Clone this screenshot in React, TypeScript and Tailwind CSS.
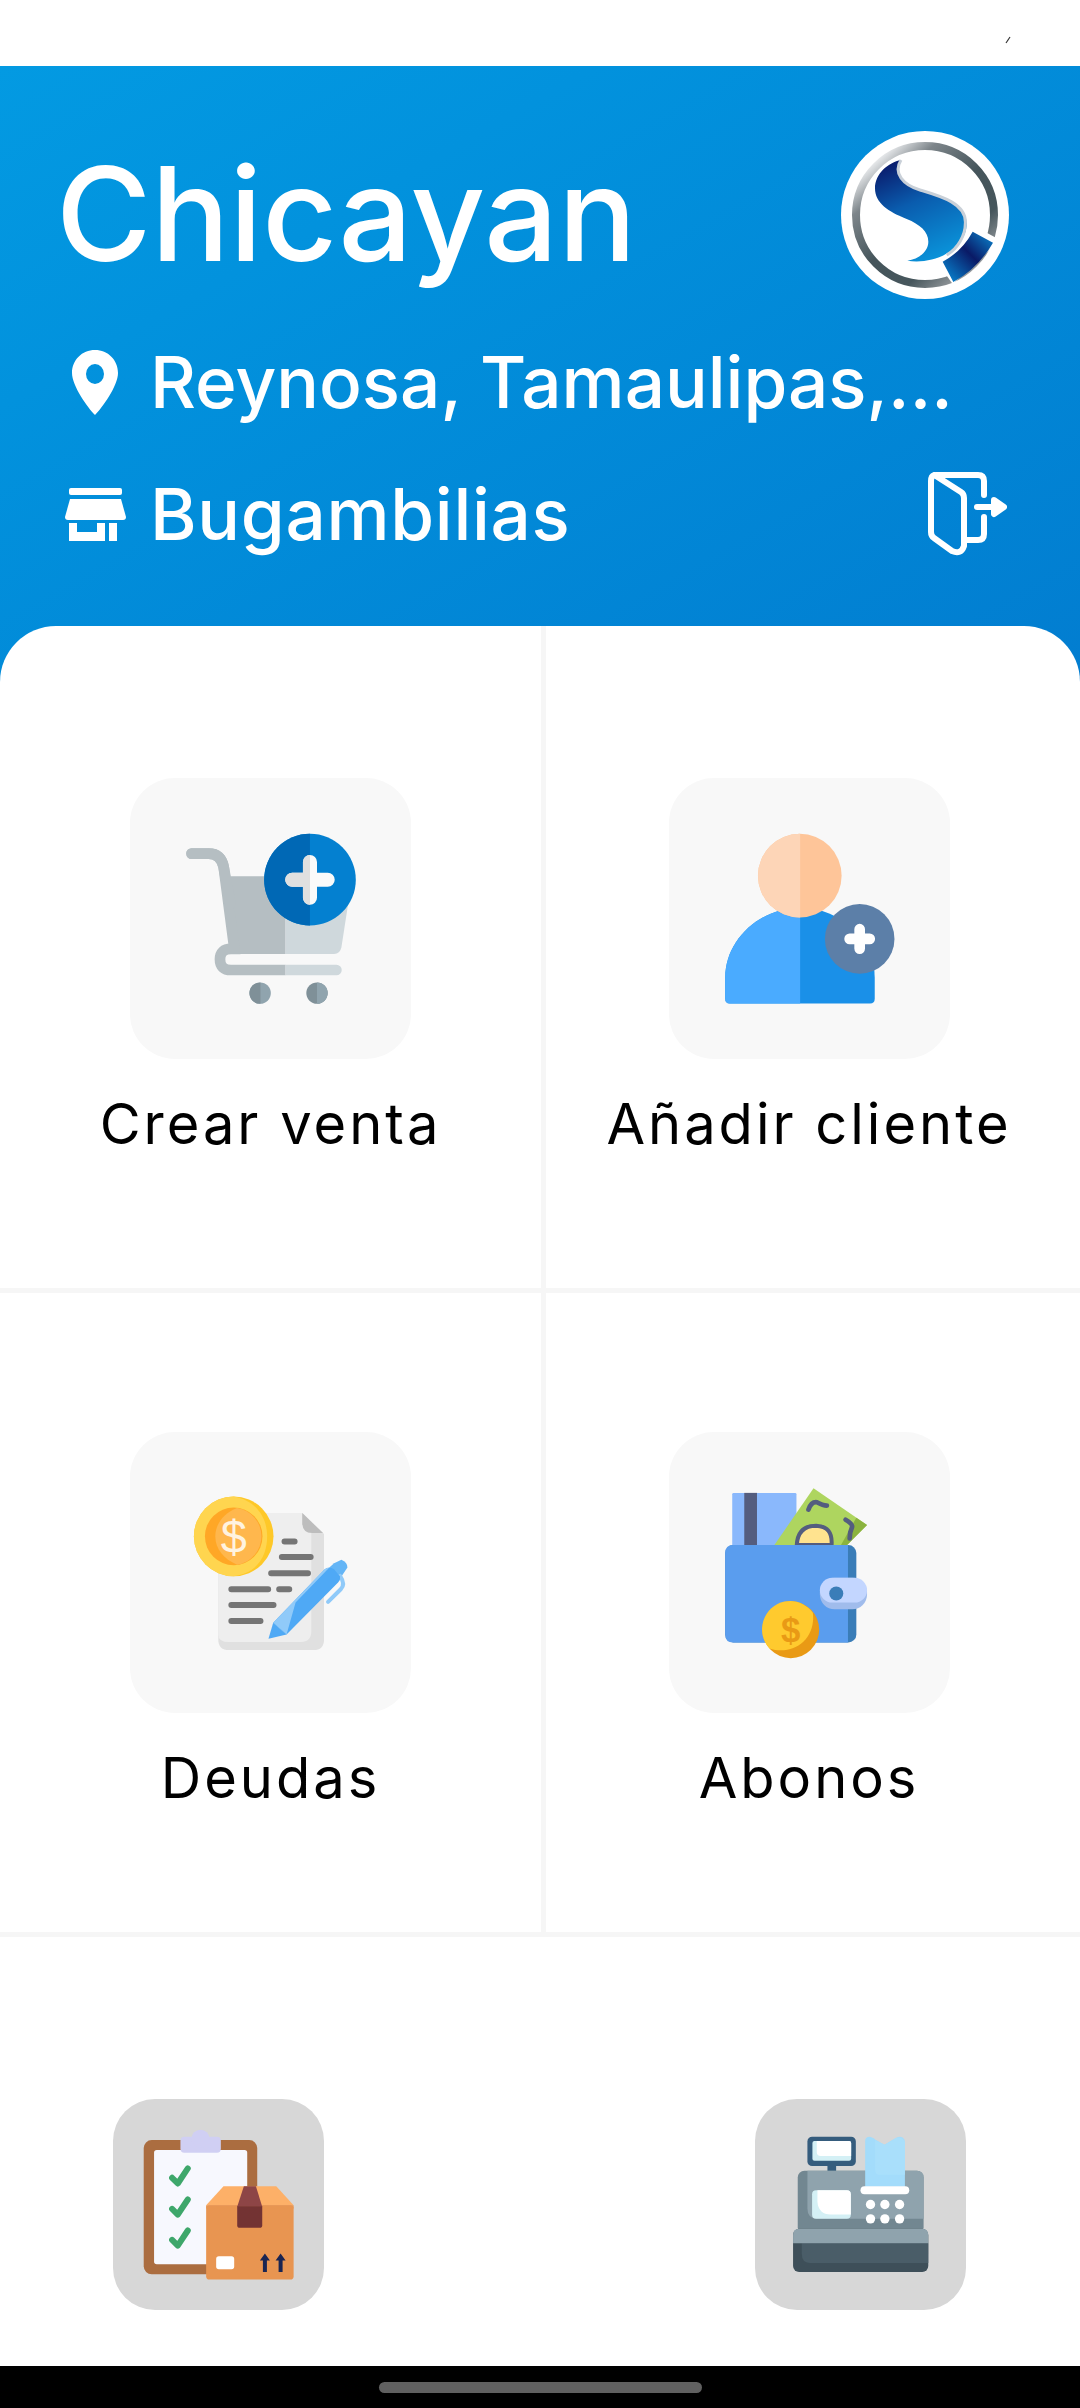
import React from "react";

const font = { fontFamily: "Inter, 'Noto Sans', sans-serif" };

function Logo() {
  return (
    <svg viewBox="63 33 504 504" className="w-[168px] h-[168px] shrink-0">
      <defs>
        <linearGradient id="ring" x1="0.15" y1="0.1" x2="0.85" y2="0.9">
          <stop offset="0" stopColor="#e8eaec" />
          <stop offset="0.18" stopColor="#7d858a" />
          <stop offset="0.5" stopColor="#45555b" />
          <stop offset="0.78" stopColor="#46565c" />
          <stop offset="1" stopColor="#9a9ea1" />
        </linearGradient>
        <linearGradient id="sblue" x1="0.3" y1="0" x2="0.7" y2="1">
          <stop offset="0" stopColor="#0a1f70" />
          <stop offset="0.4" stopColor="#0a5cae" />
          <stop offset="1" stopColor="#0a96dc" />
        </linearGradient>
        <linearGradient id="wedge" x1="0" y1="1" x2="1" y2="0">
          <stop offset="0" stopColor="#0790dc" />
          <stop offset="0.55" stopColor="#0a1a66" />
          <stop offset="1" stopColor="#0a8ad4" />
        </linearGradient>
      </defs>
      <circle cx="315" cy="285" r="252" fill="#fff" />
      <circle cx="315" cy="285" r="207" fill="none" stroke="url(#ring)" strokeWidth="24" />
      <path d="M355 432L398 492L540 360L470 322Z" fill="#fff" />
      <path d="M458 335L519 368Q475 445 400 486L368 425Q425 395 458 335Z" fill="url(#wedge)" />
      <path d="M243 120C205 128 165 160 165 205C165 250 205 275 260 297C300 313 325 335 325 365C325 395 295 418 262 422C340 435 440 390 440 310C440 250 360 228 300 210C250 195 218 160 243 120Z" fill="url(#sblue)" />
      <path d="M243 120C218 160 250 195 300 210C360 228 440 250 436 310C436 345 415 385 380 405" fill="none" stroke="#c9d0d8" strokeWidth="9" />
    </svg>
  );
}

function Pin() {
  return (
    <svg viewBox="0 0 46 65" className="w-[46px] h-[65px]">
      <path fillRule="evenodd" d="M23 0C10 0 0 10 0 23C0 36 16 58 23 65C30 58 46 36 46 23C46 10 36 0 23 0ZM23 14A9 10 0 1 1 23 34A9 10 0 1 1 23 14Z" fill="#fff" />
    </svg>
  );
}

function Store() {
  return (
    <svg viewBox="0 0 61 53" className="w-[61px] h-[53px]">
      <rect x="4" y="0" width="53" height="7" rx="2" fill="#fff" />
      <path d="M5 11H56L61 29Q61 32 58 32H3Q0 32 0 29Z" fill="#fff" />
      <path fillRule="evenodd" d="M4 35H12V44H32V35H40V53H4ZM44 35H52V53H44Z" fill="#fff" />
    </svg>
  );
}

function Exit() {
  return (
    <svg viewBox="0 0 79 84" className="w-[79px] h-[84px]" fill="none" stroke="#fff" strokeWidth="6" strokeLinecap="round" strokeLinejoin="round">
      <path d="M8 3H50Q56 3 56 9V23" />
      <path d="M56 45V62Q56 68 50 68H36" />
      <path d="M6 3Q3 4 3 9V60Q3 64 6 66L24 79Q33 83 36 74V26Q36 22 33 20L8 4" />
      <path d="M49 35H72" />
      <path d="M66 28L76 35L66 42Z" fill="#fff" />
    </svg>
  );
}

function Cart() {
  return (
    <svg viewBox="30 24 840 840" className="w-full h-full">
      <defs>
        <clipPath id="cl"><rect x="0" y="0" width="495" height="900" /></clipPath>
        <clipPath id="cr"><rect x="495" y="0" width="405" height="900" /></clipPath>
        <clipPath id="pl"><rect x="0" y="0" width="568" height="900" /></clipPath>
        <clipPath id="wl"><rect x="0" y="0" width="420" height="900" /></clipPath>
        <clipPath id="wr"><rect x="589" y="0" width="200" height="900" /></clipPath>
      </defs>
      {[["cl", "#b5bec2"], ["cr", "#cfd8dc"]].map(([c, f]) => (
        <g key={c} clipPath={`url(#${c})`}>
          <path d="M330 318H695L662 530Q658 550 640 550H342Z" fill={f} />
          <path d="M214 250H265Q302 250 310 290L342 535H332Q299 535 299 566Q299 598 332 598H647" fill="none" stroke={f} strokeWidth="32" strokeLinecap="round" />
        </g>
      ))}
      <path d="M214 250H265Q302 250 310 290L330 400" fill="none" stroke="#b5bec2" strokeWidth="32" strokeLinecap="round" />
      <circle cx="419" cy="667" r="32" fill="#90a4ae" />
      <circle cx="419" cy="667" r="32" fill="#7f9098" clipPath="url(#wl)" />
      <circle cx="589" cy="667" r="32" fill="#7f9098" />
      <circle cx="589" cy="667" r="32" fill="#90a4ae" clipPath="url(#wr)" />
      <circle cx="568" cy="328" r="137" fill="#0480d0" />
      <circle cx="568" cy="328" r="137" fill="#0068b5" clipPath="url(#pl)" />
      <path d="M515 328H621M568 275V382" stroke="#fafafa" strokeWidth="42" strokeLinecap="round" />
      <path d="M515 328H621M568 275V382" stroke="#e0e0e0" strokeWidth="42" strokeLinecap="round" clipPath="url(#pl)" />
    </svg>
  );
}

function Person() {
  return (
    <svg viewBox="30 24 840 840" className="w-full h-full">
      <defs>
        <clipPath id="hl"><rect x="0" y="0" width="422" height="900" /></clipPath>
      </defs>
      <path d="M198 620C198 510 300 412 422 412C545 412 645 510 645 620V684Q645 698 631 698H212Q198 698 198 684Z" fill="#1a90e8" />
      <path d="M198 620C198 510 300 412 422 412C545 412 645 510 645 620V684Q645 698 631 698H212Q198 698 198 684Z" fill="#4aabff" clipPath="url(#hl)" />
      <circle cx="421" cy="316" r="125" fill="#fec599" />
      <circle cx="421" cy="316" r="125" fill="#fdd5b7" clipPath="url(#hl)" />
      <circle cx="600" cy="505" r="104" fill="#5c7fa8" />
      <path d="M570 505H630M600 476V534" stroke="#fff" strokeWidth="32" strokeLinecap="round" />
    </svg>
  );
}

function Debt() {
  return (
    <svg viewBox="30 20 840 840" className="w-full h-full">
      <path d="M420 262H545L610 325V640Q610 672 578 672H326Q294 672 294 640V400Z" fill="#e0e0e0" />
      <path d="M420 262H545V290Q548 322 572 322V615Q572 648 540 648H326Q294 648 294 625V400Z" fill="#eeeeee" />
      <path d="M545 262L607 322H575Q547 322 545 295Z" fill="#bdbdbd" />
      <g stroke="#757575" strokeWidth="18" strokeLinecap="round">
        <path d="M492 347H522M484 394H570M452 442H562M333 490H443M476 490H506M333 537H459M333 585H420" />
      </g>
      <circle cx="340" cy="332" r="119" fill="#fec828" />
      <path d="M340 213A119 119 0 0 0 340 451C420 440 440 380 440 332C440 280 410 225 340 213Z" fill="#ffd54f" />
      <circle cx="340" cy="332" r="86" fill="#ffa726" />
      <path d="M350 247A86 86 0 0 1 350 417C310 400 285 370 285 332C285 295 310 262 350 247Z" fill="#ffb74d" />
      <text x="340" y="381" textAnchor="middle" fontSize="140" fontWeight="400" fill="#fff3e0" fontFamily="'Liberation Sans', sans-serif">$</text>
      <path d="M625 426L640 412L662 402Q680 410 680 425L660 455Z" fill="#64b5f6" />
      <path d="M658 450Q675 475 660 490L622 528" fill="none" stroke="#90caf9" strokeWidth="12" strokeLinecap="round" />
      <path d="M458 590L612 430Q625 422 640 430L658 452Q660 462 652 470L498 625Z" fill="#4fa9f5" />
      <path d="M458 590L612 430Q618 426 626 425L525 530L498 625Z" fill="#90caf9" />
      <path d="M444 638L458 590L498 625Z" fill="#4fa9f5" />
    </svg>
  );
}

function Wallet() {
  return (
    <svg viewBox="30 20 840 840" className="w-full h-full">
      <rect x="219" y="202" width="192" height="170" rx="4" fill="#8ab8fc" />
      <rect x="255" y="202" width="38" height="170" fill="#545d7f" />
      <path d="M345 358L462 188L622 298L555 365Z" fill="#aed55f" />
      <path d="M590 276L622 298L555 365H540Z" fill="#8bb33f" />
      <path d="M412 358Q415 300 470 300Q520 302 516 358Z" fill="#ffe38f" stroke="#545d7f" strokeWidth="12" />
      <path d="M447 252Q455 228 472 230Q490 240 502 240M558 282Q580 295 577 305Q570 320 570 338" fill="none" stroke="#545d7f" strokeWidth="14" strokeLinecap="round" />
      <rect x="198" y="358" width="392" height="291" rx="24" fill="#3a7db8" />
      <path d="M222 358H565V649H222Q198 649 198 625V382Q198 358 222 358Z" fill="#5a9dee" />
      <rect x="481" y="456" width="141" height="94" rx="44" fill="#a0bcec" />
      <rect x="481" y="456" width="141" height="74" rx="37" fill="#c3d6ff" />
      <circle cx="530" cy="503" r="21" fill="#3a7db8" />
      <circle cx="394" cy="611" r="85" fill="#e99a15" />
      <path d="M375 527A85 85 0 0 0 330 667C400 690 470 640 460 560C440 535 410 520 375 527Z" fill="#ffca2e" />
      <text x="394" y="648" textAnchor="middle" fontSize="104" fontWeight="700" fill="#e99a15" fontFamily="'Liberation Sans', sans-serif">$</text>
    </svg>
  );
}

function Inventory() {
  return (
    <svg viewBox="39 57 632 632" className="w-full h-full">
      <rect x="131" y="180" width="340" height="402" rx="24" fill="#ab6d40" />
      <rect x="162" y="210" width="279" height="342" rx="8" fill="#f7f8fe" />
      <rect x="241" y="170" width="121" height="48" rx="12" fill="#d0cff3" />
      <circle cx="301" cy="176" r="27" fill="#d0cff3" />
      <g fill="none" stroke="#3ea76b" strokeWidth="18" strokeLinecap="round" strokeLinejoin="round">
        <path d="M216 293L233 310L263 265M216 386L233 403L263 358M216 479L233 496L263 451" />
      </g>
      <path d="M318 375L370 318H528L580 375Z" fill="#fdb068" />
      <rect x="318" y="375" width="262" height="223" rx="10" fill="#e89551" />
      <path d="M318 375H580V385H318Z" fill="#e89551" />
      <path d="M431 318H467L486 380H411Z" fill="#8d4546" />
      <path d="M411 378H486V435Q486 443 478 443H419Q411 443 411 435Z" fill="#733333" />
      <rect x="348" y="528" width="54" height="39" rx="8" fill="#fff" />
      <path d="M494 520L509 541H500V575H488V541H479Z" fill="#1a2552" />
      <path d="M541 520L556 541H547V575H535V541H526Z" fill="#1a2552" />
    </svg>
  );
}

function Register() {
  return (
    <svg viewBox="48 57 632 632" className="w-full h-full">
      <rect x="265" y="255" width="26" height="20" fill="#355c7d" />
      <rect x="205" y="170" width="145" height="88" rx="14" fill="#355c7d" />
      <rect x="220" y="183" width="116" height="59" rx="6" fill="#d4f0f5" />
      <path d="M233 183H330Q336 183 336 189V228H245Q233 228 233 216Z" fill="#fff" />
      <rect x="176" y="272" width="377" height="190" rx="20" fill="#728791" />
      <path d="M205 272H533Q553 272 553 292V416H235Q205 416 205 385Z" fill="#8fa3ad" />
      <rect x="219" y="330" width="116" height="86" rx="12" fill="#d4f0f5" />
      <path d="M235 330H323Q335 330 335 342V403H275Q238 403 235 365Z" fill="#fff" />
      <path d="M378 182Q378 170 392 170Q404 172 410 180L436 194L470 174Q480 168 490 172Q497 176 497 186V320H378Z" fill="#a3dcfb" />
      <path d="M408 180L436 194L470 174Q490 168 497 186V284H420Q408 284 408 270Z" fill="#a9dffb" />
      <rect x="364" y="318" width="146" height="24" rx="12" fill="#fff" />
      {[394, 437, 481].map((x) =>
        [373, 416].map((y) => <circle key={`${x}${y}`} cx={x} cy={y} r="14" fill="#fff" />)
      )}
      <rect x="162" y="446" width="405" height="129" rx="18" fill="#3e4f59" />
      <path d="M188 489H567V548H212Q188 548 188 520Z" fill="#4a5d68" />
      <path d="M180 446H549Q567 446 567 464V489H162V464Q162 446 180 446Z" fill="#8fa3ad" />
    </svg>
  );
}

function Tile({ label, icon }: { label: string; icon: React.ReactNode }) {
  return (
    <div className="flex flex-col items-center">
      <div className="w-[281px] h-[281px] rounded-[45px] bg-[#f8f8f8] overflow-hidden">{icon}</div>
      <div className="mt-[35px] text-[56px] leading-[60px] text-black whitespace-nowrap tracking-[3px]">{label}</div>
    </div>
  );
}

export default function App() {
  return (
    <div className="w-[1080px] h-[2408px] flex flex-col bg-white overflow-hidden" style={font}>
      <div className="h-[66px] bg-white flex justify-end shrink-0">
        <svg viewBox="0 0 8 8" className="w-[8px] h-[8px] mt-[36px] mr-[68px]">
          <path d="M2 7L6 1" stroke="#333" strokeWidth="1.2" />
        </svg>
      </div>

      <div className="h-[616px] shrink-0 bg-linear-to-br from-[#039ae2] to-[#027dd0] pl-[62px] pr-[71px] pt-[65px] text-white">
        <div className="flex items-center justify-between h-[168px]">
          <div className="text-[130px] leading-none font-medium -ml-[6px] mt-[-2px]">Chicayan</div>
          <Logo />
        </div>
        <div className="flex items-center h-[80px] mt-[43px]">
          <div className="w-[66px] flex justify-center shrink-0"><Pin /></div>
          <div className="ml-[22px] text-[71px] leading-none font-medium whitespace-nowrap">Reynosa, Tamaulipas,...</div>
        </div>
        <div className="flex items-center justify-between h-[84px] mt-[50px]">
          <div className="flex items-center">
            <div className="w-[66px] flex justify-center shrink-0"><Store /></div>
            <div className="ml-[22px] text-[71px] leading-none font-medium tracking-[0.7px]">Bugambilias</div>
          </div>
          <div className="mr-[2px]"><Exit /></div>
        </div>
      </div>

      <div className="flex-1 -mt-[56px] relative bg-white rounded-t-[56px] overflow-hidden grid grid-cols-[541px_539px] grid-rows-[667px_644px_1fr]">
        <div className="border-b-[5px] border-[#f6f6f6] pt-[152px]">
          <Tile label="Crear venta" icon={<Cart />} />
        </div>
        <div className="border-b-[5px] border-l-[5px] border-[#f6f6f6] pt-[152px] pr-[8px]">
          <Tile label="Añadir cliente" icon={<Person />} />
        </div>
        <div className="border-b-[5px] border-[#f6f6f6] pt-[139px]">
          <Tile label="Deudas" icon={<Debt />} />
        </div>
        <div className="border-b-[5px] border-l-[5px] border-[#f6f6f6] pt-[139px] pr-[8px]">
          <Tile label="Abonos" icon={<Wallet />} />
        </div>
        <div className="col-span-2 flex justify-between pl-[113px] pr-[114px] pt-[162px]">
          <div className="w-[211px] h-[211px] rounded-[42px] bg-[#d7d7d7] overflow-hidden"><Inventory /></div>
          <div className="w-[211px] h-[211px] rounded-[42px] bg-[#d7d7d7] overflow-hidden"><Register /></div>
        </div>
      </div>

      <div className="h-[42px] shrink-0 bg-black flex justify-center pt-[16px]">
        <div className="w-[323px] h-[11px] rounded-full bg-[#606060]" />
      </div>
    </div>
  );
}
